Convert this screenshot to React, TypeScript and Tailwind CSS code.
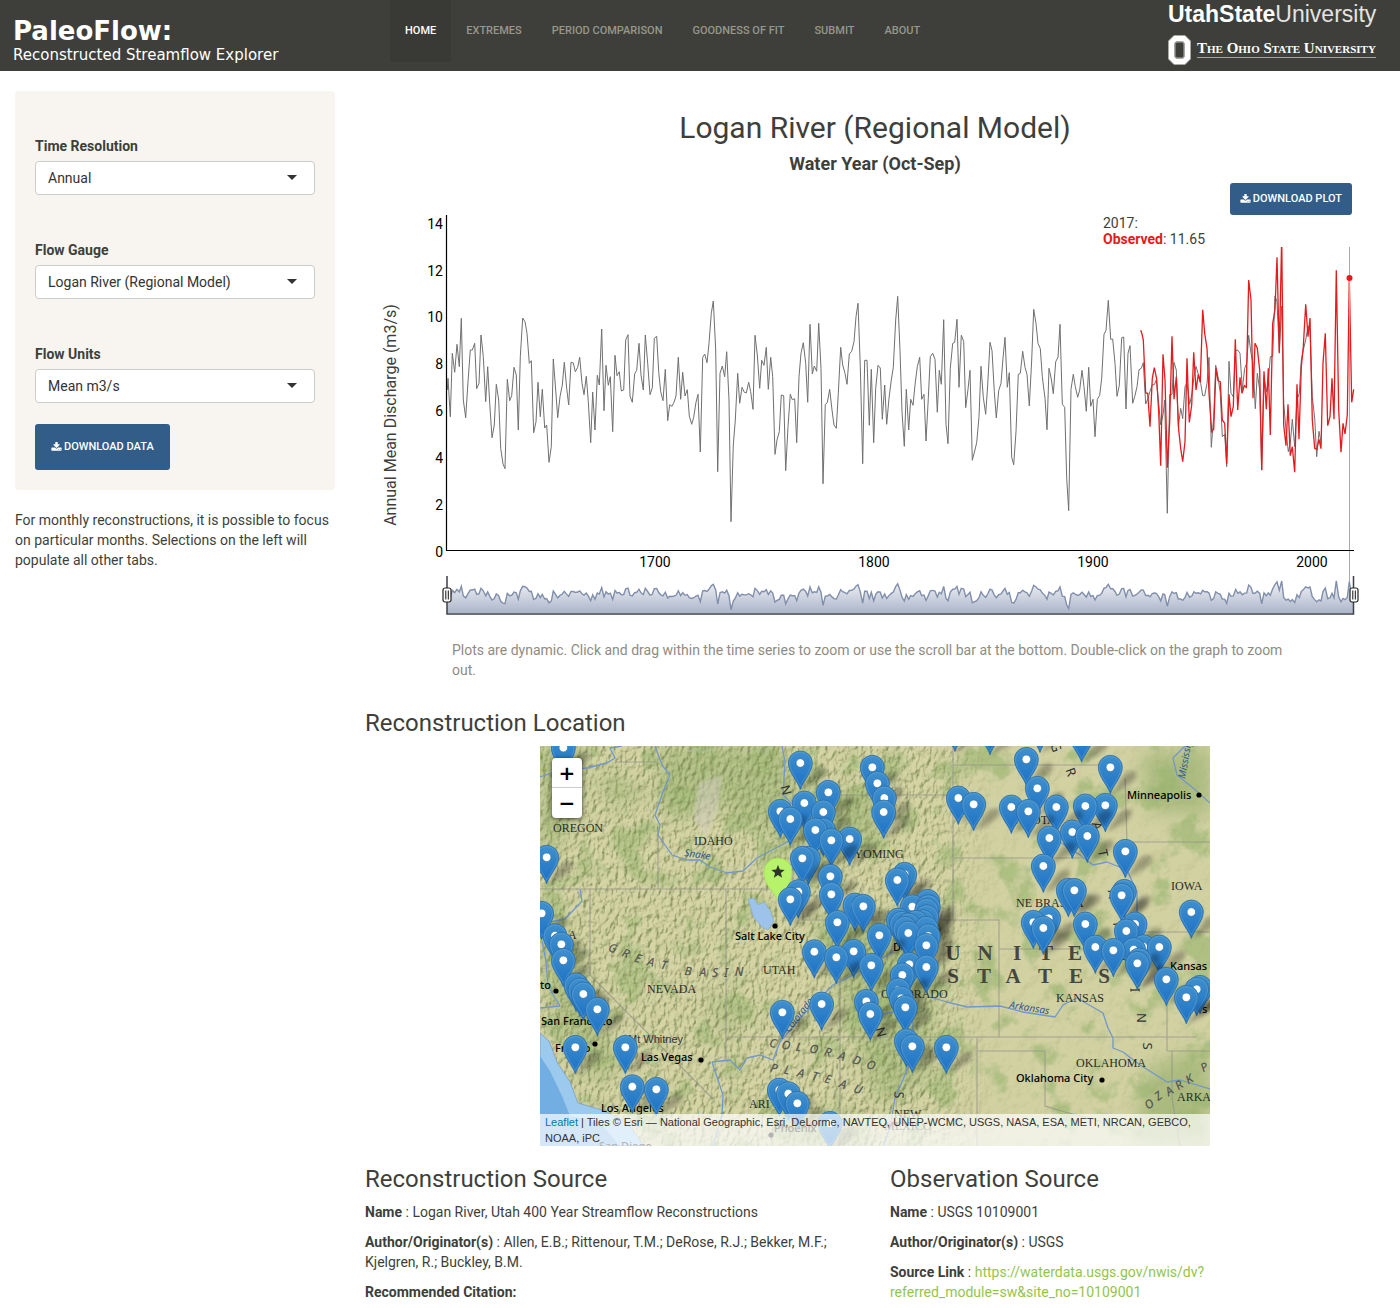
import React from "react";

type Point = [number, number];
type Letter = [string, number, number, number];

/* ---------- time series, traced in thirds of a pixel, strip by strip ---------- */

const STRIP_A =
  "82,570 84,535 91,650 97,460 104,517 111,433 118,500 124,355 130,600 137,653 144,545 151,450 157,450 164,430 170,566 177,550 183,405 190,470 197,605 203,500 209,610 216,713 223,675 229,553 236,600 242,745 249,792 255,806 262,538 269,602 275,587 282,502 289,525 295,690 301,470 308,354 315,365 321,400 328,490 334,482 341,698 348,665 354,547 361,650 367,568 374,684 380,675 387,787 394,740 400,477 407,570 413,653 420,590 427,555 433,487 440,565 446,615 453,487 460,489 466,515 473,502 479,472 486,550 492,584 499,529 505,605 512,728 518,576 525,690 532,526 538,555 545,387 552,632 558,496 565,556 571,530 578,695 585,466 591,527 598,515 604,573 611,570 617,420 624,404 630,588 637,607 644,521 650,511 657,430 663,525 670,570 676,405 683,490 690,584 697,563 703,415 710,409 716,515 722,575 729,602 736,508 743,662 749,614 756,619 762,607 768,588 775,472 782,598 788,517 795,588 802,569 808,648 815,673 821,652 828,607 834,583 841,756 848,472 854,462 861,488 867,430 874,340 880,303 887,450 893,815 900,520 907,498 914,530 920,455 927,600 933,965 940,735 946,660 953,520 959,610";
const STRIP_B =
  "36,382 43,397 49,399 56,367 62,395 69,448 75,226 82,285 89,385 95,301 102,316 109,262 115,388 122,292 128,350 135,583 141,540 148,515 154,405 161,407 167,632 174,500 181,403 187,419 194,416 200,548 207,350 213,280 220,248 227,310 233,427 240,193 247,342 253,318 260,334 266,190 273,325 279,671 286,433 292,428 299,388 306,450 312,495 319,505 325,400 332,262 338,315 345,340 351,373 358,282 365,274 372,245 378,170 384,130 391,320 398,611 404,301 411,301 418,496 424,328 431,548 437,385 444,316 451,324 457,478 464,375 470,493 477,415 484,360 490,322 497,180 503,109 510,272 516,455 523,559 529,388 536,510 542,418 549,436 555,375 562,320 569,292 575,418 582,403 588,543 595,415 601,290 608,280 615,298 622,457 628,331 634,373 641,179 648,493 654,551 661,325 668,250 674,247 681,178 687,382 694,226 701,244 707,443 714,388 720,331 727,601 734,573 740,548 747,470 753,319 760,412 767,463 773,375 780,247 786,272 793,395 799,474 806,392 813,370 819,295 825,232 832,382 838,338 845,592 851,614 858,515 865,343 871,340 878,274 885,322 891,343 898,438 905,300 911,148 918,190 924,250 931,266 937,350 945,415 951,509 957,325";
const STRIP_C =
  "34,447 40,491 47,395 54,382 60,283 67,523 74,532 80,745 86,842 93,478 100,433 106,470 113,502 119,480 126,421 132,470 139,544 146,412 152,529 159,508 165,620 172,508 179,496 185,445 192,313 198,301 205,211 212,328 218,327 225,400 231,499 238,466 245,323 251,321 258,537 264,370 270,347 278,520 284,500 291,470 297,419 304,415 310,398 317,522 324,505 330,484 337,464 343,464 349,450 356,520 362,584 369,555 374,510 382,850 389,494 396,493 402,397 409,420 415,590 422,535 428,566 435,470 441,460 449,523 456,490 462,440 468,409 475,433 482,460 488,497 494,497 501,460 507,382 514,652 521,560 527,406 534,440 541,490 547,620 554,613 560,710 567,394 573,490 580,500 587,361 594,361 600,370 607,478 614,415 620,400 626,316 633,370 639,400 646,536 652,430 659,480 665,720 672,440 679,485 685,455 691,380 698,379 705,198 711,215 718,365 725,228 731,520 738,600 745,665 751,640 757,568 764,650 771,510 778,490 784,390 790,360 797,330 804,288 810,300 817,500 824,565 830,680 837,604 843,638";
const OBSERVED =
  "302,301 306,312 310,330 317,489 323,490 330,590 337,445 343,413 350,447 356,545 362,707 369,373 375,450 382,713 389,575 396,319 402,508 409,440 416,600 422,655 428,695 435,635 441,385 448,577 455,525 461,367 468,480 475,433 481,457 488,239 494,310 501,355 507,490 515,605 521,598 528,415 534,452 541,456 547,570 554,580 560,702 567,493 573,560 580,530 586,328 593,540 600,442 606,490 613,467 619,472 626,150 633,210 639,505 645,340 652,355 659,420 665,721 672,424 679,538 685,415 691,615 698,280 705,240 711,82 718,370 725,20 731,585 738,647 744,523 751,677 757,650 764,727 771,463 777,628 784,410 790,350 797,223 804,320 810,264 817,570 824,655 830,658 837,628 843,656 849,400 856,310 863,587 870,560 876,445 882,568 889,121 896,540 903,667 909,580 915,612 922,555 928,143 935,517 941,478";

const parse = (s: string, dx: number, dy: number): Point[] =>
  s.split(" ").map((p) => {
    const [x, y] = p.split(",").map(Number);
    return [x / 3 + dx, y / 3 + dy];
  });

const reconstructed: Point[] = [
  ...parse(STRIP_A, 55, -15),
  ...parse(STRIP_B, 365, 45),
  ...parse(STRIP_C, 675, 15),
];
const observed: Point[] = parse(OBSERVED, 675, 15);

const AXIS_Y = 335;
const toPoints = (pts: Point[]) => pts.map(([x, y]) => `${x.toFixed(1)},${y.toFixed(1)}`).join(" ");

const lastReconstructed = reconstructed[reconstructed.length - 1][0];
const overview: Point[] = [
  ...reconstructed.map(([x, y]): Point => {
    const match = observed.find(([ox]) => Math.abs(ox - x) < 1);
    return [x, match ? (y + match[1]) / 2 : y];
  }),
  ...observed.filter(([x]) => x > lastReconstructed + 1),
].map(([x, y]): Point => [x, 398 - (AXIS_Y - y) * 0.115]);

const Y_TICKS: [string, number][] = [
  ["14", 8],
  ["12", 55],
  ["10", 101],
  ["8", 148],
  ["6", 195],
  ["4", 242],
  ["2", 289],
  ["0", 336],
];
const X_TICKS: [string, number][] = [
  ["1700", 290],
  ["1800", 509],
  ["1900", 728],
  ["2000", 947],
];

function RangeHandle({ x }: { x: number }) {
  return (
    <g transform={`translate(${x} 380)`}>
      <rect x="-4" y="-7" width="8" height="14" rx="2" fill="#fff" stroke="#222" strokeWidth="1.2" />
      <path d="M-1.2-4.5v9M1.3-4.5v9" stroke="#111" strokeWidth="1" />
    </g>
  );
}

function Chart() {
  return (
    <div className="relative w-full">
      <svg viewBox="0 0 1020 405" className="block w-full" role="img" aria-label="Annual mean discharge time series">
        <defs>
          <linearGradient id="overviewFill" x1="0" y1="365" x2="0" y2="400" gradientUnits="userSpaceOnUse">
            <stop offset="0" stopColor="#f4f5f8" />
            <stop offset="1" stopColor="#a7b1c7" />
          </linearGradient>
        </defs>
        <text x="31" y="200" transform="rotate(-90 31 200)" textAnchor="middle" className="fill-[#3e3f3a] text-[16px]">
          Annual Mean Discharge (m3/s)
        </text>
        <g className="fill-black text-[14px]">
          {Y_TICKS.map(([t, y]) => (
            <text key={t} x="78" y={y + 6} textAnchor="end">
              {t}
            </text>
          ))}
          {X_TICKS.map(([t, x]) => (
            <text key={t} x={x} y="352" textAnchor="middle">
              {t}
            </text>
          ))}
        </g>
        <polyline points={toPoints(reconstructed)} fill="none" stroke="#707070" strokeWidth="1" />
        <polyline points={toPoints(observed)} fill="none" stroke="#e41a1c" strokeWidth="1.3" />
        <path d="M984.5 32V398" stroke="#aaa" strokeWidth="1" />
        <circle cx="984.5" cy="63" r="3" fill="#e41a1c" />
        <path d="M81.500 0V335.500H989" fill="none" stroke="#000" strokeWidth="1.2" />
        <polygon points={`82,398 ${toPoints(overview)} 989,398`} fill="url(#overviewFill)" />
        <polyline points={toPoints(overview)} fill="none" stroke="#808fab" strokeWidth="1.4" />
        <path d="M82 361V399H988.500V361" fill="none" stroke="#3c3f47" strokeWidth="1.5" />
        <RangeHandle x={82} />
        <RangeHandle x={989} />
      </svg>
      <div className="absolute right-8 top-0 h-8 w-[250px] bg-white text-sm leading-4">
        2017:
        <br />
        <b className="text-[#e41a1c]">Observed</b>: 11.65
      </div>
    </div>
  );
}

/* ---------- map ---------- */

const MARKERS_WEST: Point[] = [
  [70, 8], [20, 337], [5, 505], [45, 572], [64, 598], [70, 646], [108, 720], [120, 735], [130, 747], [172, 793],
  [106, 907], [256, 907], [277, 1025], [349, 1033],
];
const MARKERS_CENTER: Point[] = [
  [121, 54], [337, 67], [352, 115], [373, 159], [371, 201], [205, 142], [133, 174], [190, 201], [61, 199], [91, 222],
  [190, 255], [166, 255], [214, 286], [269, 282], [145, 340], [127, 340], [211, 394], [214, 448], [115, 440], [91, 463],
  [285, 480], [310, 484], [232, 532], [358, 571], [163, 620], [281, 619], [229, 637], [334, 661], [185, 777], [67, 802],
  [319, 769], [331, 807], [434, 388], [412, 405], [457, 485], [503, 469], [505, 485], [500, 496], [500, 515], [488, 530],
  [415, 525], [425, 535], [445, 540], [435, 550], [468, 532], [499, 550], [505, 573], [445, 564], [499, 601], [448, 658],
  [499, 666], [427, 690], [415, 735], [424, 760], [436, 787], [439, 887], [457, 904], [559, 907], [595, 159], [641, 178],
  [58, 1035], [85, 1046], [112, 1075], [210, 1135], [585, -60],
];
const MARKERS_EAST: Point[] = [
  [30, -50], [180, -57], [305, -28], [139, 43], [391, 67], [172, 130], [94, 186], [145, 199], [229, 186], [316, 183],
  [376, 181], [208, 279], [277, 261], [322, 273], [436, 319], [190, 363], [265, 436], [283, 436], [433, 439], [425, 451],
  [634, 501], [160, 532], [206, 520], [190, 549], [316, 537], [465, 537], [439, 558], [346, 606], [400, 616], [461, 614],
  [490, 605], [538, 606], [478, 645], [472, 655], [559, 703], [660, 727], [650, 733], [619, 757],
];

const place = (pts: Point[], dx: number): Point[] => pts.map(([x, y]) => [x / 3 + dx, y / 3 - 1]);

const markers: Point[] = [...place(MARKERS_WEST, 0), ...place(MARKERS_CENTER, 220), ...place(MARKERS_EAST, 440)].sort(
  (a, b) => a[1] - b[1],
);

const STATE_LABELS: [string, number, number][] = [
  ["OREGON", 13, 86],
  ["IDAHO", 154, 99],
  ["NEVADA", 107, 247],
  ["UTAH", 223, 228],
  ["WYOMING", 303, 112],
  ["COLORADO", 341, 252],
  ["NE BRASKA", 476, 161],
  ["KANSAS", 516, 256],
  ["OKLAHOMA", 536, 321],
  ["IOWA", 631, 144],
  ["ARKA", 637, 355],
  ["ARI", 209, 362],
  ["NEW", 354, 372],
  ["MEXICO", 344, 384],
  ["A", 28, 193],
  ["DAKOTA", 466, 78],
];

const CITY_LABELS: [string, number, number][] = [
  ["Salt Lake City", 195, 194],
  ["to", 0, 243],
  ["San Francisco", 1, 279],
  ["Fresno", 15, 306],
  ["Las Vegas", 101, 315],
  ["Los Angeles", 61, 366],
  ["Minneapolis", 587, 53],
  ["Oklahoma City", 476, 336],
  ["Kansas", 630, 224],
  ["Phoenix", 234, 386],
  ["San Diego", 59, 404],
  ["D", 353, 205],
  ["s", 662, 267],
];

const CITY_DOTS: Point[] = [
  [16, 245], [55, 298], [161, 314], [235, 180], [659, 49], [562, 334], [231, 389],
];

const RANGE_LETTERS: Letter[] = [
  ["G", 73, 202, 22], ["R", 86, 207, 22], ["E", 98, 212, 18], ["A", 111, 216, 14], ["T", 124, 219, 12],
  ["B", 148, 225, 6], ["A", 163, 226, 2], ["S", 175, 227, 0], ["I", 186, 227, 0], ["N", 199, 226, 0],
  ["C", 233, 297, 10], ["O", 246, 299, 10], ["L", 259, 301, 10], ["O", 274, 303, 12], ["R", 288, 306, 15],
  ["A", 302, 310, 18], ["D", 317, 314, 18], ["O", 331, 319, 20],
  ["P", 234, 322, 12], ["L", 247, 324, 12], ["A", 261, 327, 14], ["T", 275, 330, 14], ["E", 288, 333, 16],
  ["A", 303, 338, 20], ["U", 318, 343, 20],
  ["O", 609, 358, -38], ["Z", 618, 350, -38], ["A", 629, 345, -35], ["R", 639, 339, -35], ["K", 649, 333, -30],
  ["P", 664, 321, -30],
];

const PLAINS_LETTERS: Letter[] = [
  ["N", 246, 44, 75], ["N", 341, 286, 75], ["S", 359, 349, 95], ["G", 516, 1, 70], ["R", 531, 26, 70],
  ["A", 557, 80, 75], ["T", 563, 107, 78], ["A", 573, 148, 82], ["P", 578, 180, 85], ["L", 583, 215, 85],
  ["I", 595, 244, 88], ["N", 602, 272, 90], ["S", 608, 300, 90],
];

const COUNTRY_LETTERS: Letter[] = [
  ["U", 413, 206, 0], ["N", 445, 206, 0], ["I", 477, 206, 0], ["T", 506, 206, 0], ["E", 535, 206, 0],
  ["S", 413, 229, 0], ["T", 444, 229, 0], ["A", 473, 229, 0], ["T", 505, 229, 0], ["E", 536, 229, 0], ["S", 564, 229, 0],
];

function Letters({ items, size }: { items: Letter[]; size: number }) {
  return (
    <>
      {items.map(([c, x, y, r], i) => (
        <text key={i} transform={`translate(${x} ${y}) rotate(${r})`} y={size * 0.36} textAnchor="middle">
          {c}
        </text>
      ))}
    </>
  );
}

function MapDrawing() {
  return (
    <svg
      viewBox="0 0 670 400"
      preserveAspectRatio="xMidYMid slice"
      className="block h-full w-full"
      role="img"
      aria-label="Map of streamflow reconstruction sites in the western United States"
    >
      <defs>
        <filter id="hills" x="0" y="0" width="100%" height="100%" colorInterpolationFilters="sRGB">
          <feTurbulence type="fractalNoise" baseFrequency="0.22 0.14" numOctaves="4" seed="7" />
          <feDiffuseLighting surfaceScale="2" diffuseConstant="1.1" lightingColor="#fff">
            <feDistantLight azimuth="225" elevation="55" />
          </feDiffuseLighting>
          <feColorMatrix values="0 0 0 0 0.5  0 0 0 0 0.54  0 0 0 0 0.34  -2.2 0 0 0 1.95" />
        </filter>
        <filter id="ridges" x="0" y="0" width="100%" height="100%" colorInterpolationFilters="sRGB">
          <feTurbulence type="fractalNoise" baseFrequency="0.22 0.14" numOctaves="4" seed="7" />
          <feDiffuseLighting surfaceScale="2" diffuseConstant="1.1" lightingColor="#fff">
            <feDistantLight azimuth="225" elevation="55" />
          </feDiffuseLighting>
          <feColorMatrix values="0 0 0 0 0.93  0 0 0 0 0.92  0 0 0 0 0.76  5 0 0 0 -4.6" />
        </filter>
        <filter id="plainsRelief" x="0" y="0" width="100%" height="100%" colorInterpolationFilters="sRGB">
          <feTurbulence type="fractalNoise" baseFrequency="0.07" numOctaves="4" seed="3" />
          <feDiffuseLighting surfaceScale="1.2" diffuseConstant="1.1" lightingColor="#fff">
            <feDistantLight azimuth="225" elevation="55" />
          </feDiffuseLighting>
          <feColorMatrix values="0 0 0 0 0.55  0 0 0 0 0.58  0 0 0 0 0.38  -1.5 0 0 0 1.36" />
        </filter>
        <filter id="forest" x="0" y="0" width="100%" height="100%" colorInterpolationFilters="sRGB">
          <feTurbulence type="fractalNoise" baseFrequency="0.028" numOctaves="5" seed="21" />
          <feColorMatrix values="0 0 0 0 0.6  0 0 0 0 0.71  0 0 0 0 0.44  7 0 0 0 -3.8" />
        </filter>
        <filter id="soft">
          <feGaussianBlur stdDeviation="9" />
        </filter>
        <filter id="shadowBlur" x="-50%" y="-50%" width="200%" height="200%">
          <feGaussianBlur stdDeviation="2" />
        </filter>
        <linearGradient id="westFade" x1="0" x2="1">
          <stop offset="0.58" stopColor="#fff" />
          <stop offset="0.68" stopColor="#000" />
        </linearGradient>
        <mask id="westMask">
          <rect width="670" height="400" fill="url(#westFade)" />
        </mask>
        <linearGradient id="pinFill" x1="0" x2="0" y1="0" y2="1">
          <stop offset="0" stopColor="#4090cd" />
          <stop offset="1" stopColor="#1b70c4" />
        </linearGradient>
        <g id="pin">
          <path d="M1 27L12 10C18 2 28 2 26 9C24 16 12 21 1 27Z" fill="#000" opacity="0.26" filter="url(#shadowBlur)" />
          <path
            d="M0 26.500C-2 19-12 9.500-12 0A12 12 0 0 1 12 0C12 9.500 2 19 0 26.500Z"
            fill="url(#pinFill)"
            stroke="#2e6da4"
            strokeWidth="0.8"
          />
          <path
            d="M0 23C-2 17-10.800 8.500-10.800 0A10.800 10.800 0 0 1 10.800 0C10.800 8.500 2 17 0 23Z"
            fill="none"
            stroke="#67a9dc"
            strokeWidth="0.8"
            opacity="0.6"
          />
          <circle r="4.300" fill="#fff" stroke="#2a72b0" strokeWidth="0.7" />
        </g>
      </defs>

      <rect width="670" height="400" fill="#d1d1a2" />
      <g fill="#93ad68" opacity="0.6" filter="url(#soft)">
        <path d="M0 0H45L40 60L10 110L0 130ZM60 20L110 50L70 60ZM120 0H245L270 90L215 80L180 60L140 75L120 60Z" />
        <path d="M0 170L35 200L55 260L80 320L60 340L30 300L5 240ZM240 60L330 40L345 90L260 140ZM270 170L400 170L390 330L340 360L300 250Z" />
        <path d="M600 10L670 0V70L610 65ZM610 320L670 300V400H590ZM160 240L200 270L190 300ZM240 370H330V400H240Z" />
      </g>
      <rect width="670" height="400" filter="url(#forest)" opacity="0.6" />
      <g mask="url(#westMask)">
        <rect width="670" height="400" filter="url(#hills)" opacity="0.85" />
        <rect width="670" height="400" filter="url(#ridges)" opacity="0.45" />
      </g>
      <rect width="670" height="400" filter="url(#plainsRelief)" opacity="0.6" />
      <path d="M158 38L182 28L178 60L166 90L154 72Z" fill="#d6cfc6" opacity="0.5" filter="url(#shadowBlur)" />

      {/* water */}
      <path d="M0 287L9 295L17 316L30 336L38 357L62 364L87 376L104 400H0Z" fill="#9ccaee" stroke="#7b9fc4" strokeWidth="0.8" />
      <path d="M0 310L10 325L22 350L30 370L60 376L80 400H0Z" fill="#73aee2" />
      <path d="M208 153L214 152L218 159L224 156L230 164L234 175L228 184L222 181L214 172Z" fill="#9dc3ea" stroke="#84a6cd" strokeWidth="0.6" />

      {/* state borders */}
      <g fill="none" stroke="#8f8f86" strokeWidth="1.1" opacity="0.7">
        <path d="M0 143H253M118 143V90M50 143V229L173 353M186 143V291H657M75 16H118M253 143V49H413M263 174H413M300 174V400" />
        <path d="M413 0V174H459V291M413 19H577M413 112H550M585 32L587 96H670M597 186H670M459 203H580M627 233V305M437 291V305H505V360L525 366L560 375" />
        <path d="M627 305H670M632 305V352L640 400M437 305V400M253 143H263V174M186 291V315" />
      </g>

      {/* rivers */}
      <g fill="none" stroke="#7397cb" strokeWidth="1.300" strokeLinejoin="round">
        <path d="M0 31L20 24L47 22L67 17L75 12L70 2L82 0M115 0L122 19L130 29L123 46L115 69L120 79L118 89L132 109L147 114L160 114L170 121L187 127L203 125L217 112L253 93" />
        <path d="M40 143L42 155L25 173L10 176M2 195L6 215L8 240L20 260L0 262M172 316L183 349L182 369L173 400M172 316L190 314L200 324L207 312L220 309L233 314L240 296L263 269L293 239L313 229L353 206" />
        <path d="M390 251L407 256L427 261L460 260L483 266L515 271L523 259L537 252L563 267L568 282L573 292L573 302L583 306L600 319L613 327L627 336L640 334L670 343" />
        <path d="M520 96L540 109L553 119L567 116L587 124L597 146L597 166M645 0L633 12L637 29L653 42L670 57M340 269L353 266L373 276L373 306L365 329L355 352L350 382L343 400M242 0L245 16L243 49L253 59" />
      </g>

      {/* lettering */}
      <g className="fill-[#2b2c28] font-['Liberation_Serif'] text-[12px]">
        {STATE_LABELS.map(([t, x, y]) => (
          <text key={t} x={x} y={y}>
            {t}
          </text>
        ))}
      </g>
      <g className="fill-[#565954] font-['Noto_Sans'] text-[12px] font-medium italic">
        <Letters items={RANGE_LETTERS} size={12} />
      </g>
      <g className="fill-[#333] font-['Noto_Sans'] text-[13px]">
        <Letters items={PLAINS_LETTERS} size={13} />
      </g>
      <g className="fill-[#46473f] font-['Liberation_Serif'] text-[21px] font-bold">
        <Letters items={COUNTRY_LETTERS} size={21} />
      </g>
      <g className="fill-[#31598f] font-['Noto_Sans'] text-[10px] italic">
        <text transform="translate(144 110) rotate(8)">Snake</text>
        <text transform="translate(469 262) rotate(9)">Arkansas</text>
        <text transform="translate(249 287) rotate(-52)">Colorado</text>
        <text transform="translate(645 33) rotate(-80)">Mississippi</text>
      </g>
      <g className="fill-black font-['Noto_Sans'] text-[11px] font-medium">
        {CITY_LABELS.map(([t, x, y]) => (
          <text key={t} x={x} y={y}>
            {t}
          </text>
        ))}
        {CITY_DOTS.map(([x, y]) => (
          <circle key={x} cx={x} cy={y} r="2.600" />
        ))}
      </g>
      <text x="88" y="297" className="fill-[#333] font-['Liberation_Sans'] text-[11px]">
        Mt Whitney
      </text>

      {/* selected site and the others */}
      <path
        d="M238 156C236 146 224 141 224 126A14 14 0 0 1 252 126C252 141 240 146 238 156Z"
        fill="#b6f36a"
        stroke="#a3dd58"
        strokeWidth="0.8"
      />
      <path d="M238 119L239.800 123.600L244.600 123.900L240.900 127L242.100 131.700L238 129.100L233.900 131.700L235.100 127L231.400 123.900L236.200 123.600Z" fill="#2d3328" />
      {markers.map(([x, y], i) => (
        <use key={i} href="#pin" x={x} y={y} />
      ))}
    </svg>
  );
}

function SiteMap() {
  return (
    <div className="relative mx-auto h-[400px] w-full max-w-[670px] overflow-hidden bg-[#cfd0a0]">
      <MapDrawing />
      <div className="absolute left-3 top-3 flex w-[30px] flex-col overflow-hidden rounded bg-white font-['DejaVu_Sans'] text-xl font-bold leading-[30px] text-black shadow-[0_1px_5px_rgba(0,0,0,0.65)]">
        <button aria-label="Zoom in" className="h-[30px] border-b border-[#ccc]">
          +
        </button>
        <button aria-label="Zoom out" className="h-[30px]">
          −
        </button>
      </div>
      <div className="absolute inset-x-0 bottom-0 bg-white/70 px-[5px] font-['Liberation_Sans'] text-[11px] leading-4 text-[#333]">
        <a href="#leaflet" className="text-[#0078a8]">
          Leaflet
        </a>{" "}
        | Tiles © Esri — National Geographic, Esri, DeLorme, NAVTEQ, UNEP-WCMC, USGS, NASA, ESA, METI, NRCAN, GEBCO, NOAA, iPC
      </div>
    </div>
  );
}

/* ---------- page parts ---------- */

const NAV = ["Home", "Extremes", "Period Comparison", "Goodness of Fit", "Submit", "About"];

function Header() {
  return (
    <header className="flex h-[71px] items-start bg-[#3e3f3a]">
      <a href="#home" className="w-[390px] pl-[13px] pt-[15px] font-['DejaVu_Sans'] text-white">
        <span className="block text-[26px] font-bold leading-8">PaleoFlow:</span>
        <span className="block whitespace-nowrap text-[15px] leading-4">Reconstructed Streamflow Explorer</span>
      </a>
      <nav className="flex text-[11px] font-medium uppercase leading-[62px]">
        {NAV.map((item, i) => (
          <a
            key={item}
            href={`#${item.toLowerCase().replace(/ /g, "-")}`}
            className={i === 0 ? "bg-[#393a35] px-[15px] text-white" : "px-[15px] text-[#98978b]"}
          >
            {item}
          </a>
        ))}
      </nav>
      <div className="ml-auto mr-6 flex w-[208px] flex-col text-white">
        <a href="#usu" className="whitespace-nowrap font-['Liberation_Sans'] text-[23px] leading-7">
          <b>UtahState</b>
          <span className="text-[#e4e4e2]">University</span>
        </a>
        <a href="#osu" className="mt-[7px] flex items-start gap-[6px]">
          <svg viewBox="0 0 23 30" className="h-[30px] w-[23px] shrink-0" aria-hidden="true">
            <path d="M6 .5H17L22.500 6V24L17 29.500H6L.5 24V6Z" fill="#fff" stroke="#a8a8a5" />
            <path d="M8.500 7H14.500L16 8.500V21.500L14.500 23H8.500L7 21.500V8.500Z" fill="#3e3f3a" stroke="#8b8b88" strokeWidth="1.500" />
          </svg>
          <span className="mt-1 flex-1 whitespace-nowrap border-b border-[#a3a39f] font-['Liberation_Serif'] text-[15px] font-bold leading-[18px] [font-variant-caps:small-caps]">
            The Ohio State University
          </span>
        </a>
      </div>
    </header>
  );
}

function SelectField({ id, label, value }: { id: string; label: string; value: string }) {
  return (
    <div>
      <label htmlFor={id} className="mb-[5px] block font-bold">
        {label}
      </label>
      <div className="relative">
        <select
          id={id}
          className="h-[34px] w-full appearance-none rounded border border-[#ccc] bg-white px-3 text-sm text-[#333]"
        >
          <option>{value}</option>
        </select>
        <svg viewBox="0 0 10 5" className="pointer-events-none absolute right-[18px] top-[14px] h-[5px] w-[10px]" aria-hidden="true">
          <path d="M0 0H10L5 5Z" fill="#333" />
        </svg>
      </div>
    </div>
  );
}

function DownloadIcon() {
  return (
    <svg viewBox="0 128 1792 1792" className="size-[11px]" fill="currentColor" aria-hidden="true">
      <path d="M1344 1344q0-26-19-45t-45-19-45 19-19 45 19 45 45 19 45-19 19-45zm256 0q0-26-19-45t-45-19-45 19-19 45 19 45 45 19 45-19 19-45zm128-224v320q0 40-28 68t-68 28h-1472q-40 0-68-28t-28-68v-320q0-40 28-68t68-28h465l135 136q58 56 136 56t136-56l136-136h464q40 0 68 28t28 68zm-325-569q17 41-14 70l-448 448q-18 19-45 19t-45-19l-448-448q-31-29-14-70 17-39 59-39h256v-448q0-26 19-45t45-19h256q26 0 45 19t19 45v448h256q42 0 59 39z" />
    </svg>
  );
}

function DownloadButton({ children, className }: { children: string; className: string }) {
  return (
    <button
      className={`flex items-center gap-[2px] whitespace-nowrap rounded-[3px] bg-[#325d88] text-[11px] font-medium uppercase text-white ${className}`}
    >
      <DownloadIcon />
      {children}
    </button>
  );
}

function Fact({ name, children }: { name: string; children?: React.ReactNode }) {
  return (
    <p className="mb-[10px]">
      <b>{name}</b>
      {children}
    </p>
  );
}

export default function App() {
  return (
    <div className="min-h-screen bg-white font-['Roboto',sans-serif] text-sm leading-5 text-[#3e3f3a]">
      <Header />
      <div className="grid grid-cols-[1fr_3fr] pt-5">
        <aside className="px-[15px]">
          <form className="flex flex-col rounded bg-[#f8f5f0] px-5 pb-5 pt-[45px]">
            <div className="flex flex-col gap-[45px]">
              <SelectField id="resolution" label="Time Resolution" value="Annual" />
              <SelectField id="gauge" label="Flow Gauge" value="Logan River (Regional Model)" />
              <SelectField id="units" label="Flow Units" value="Mean m3/s" />
            </div>
            <DownloadButton className="mt-[21px] h-[46px] self-start px-4">Download Data</DownloadButton>
          </form>
          <p className="mt-5">
            For monthly reconstructions, it is possible to focus on particular months. Selections on the left will populate
            all other tabs.
          </p>
        </aside>

        <main className="px-[15px] pt-5">
          <h1 className="text-center text-[30px] leading-[34px]">Logan River (Regional Model)</h1>
          <h2 className="mt-2 text-center text-lg font-bold leading-[22px]">Water Year (Oct-Sep)</h2>
          <div className="mr-[33px] mt-2 flex justify-end">
            <DownloadButton className="h-8 px-[10px]">Download Plot</DownloadButton>
          </div>
          <Chart />
          <p className="mx-[87px] mt-5 text-[#8e8c84]">
            Plots are dynamic. Click and drag within the time series to zoom or use the scroll bar at the bottom.
            Double-click on the graph to zoom out.
          </p>
          <h3 className="mb-[10px] mt-[30px] text-2xl leading-[26px]">Reconstruction Location</h3>
          <SiteMap />
          <div className="mt-5 grid grid-cols-2 gap-[30px]">
            <section>
              <h3 className="mb-[10px] text-2xl leading-[26px]">Reconstruction Source</h3>
              <Fact name="Name"> : Logan River, Utah 400 Year Streamflow Reconstructions</Fact>
              <Fact name="Author/Originator(s)">
                {" "}
                : Allen, E.B.; Rittenour, T.M.; DeRose, R.J.; Bekker, M.F.; Kjelgren, R.; Buckley, B.M.
              </Fact>
              <Fact name="Recommended Citation:" />
            </section>
            <section>
              <h3 className="mb-[10px] text-2xl leading-[26px]">Observation Source</h3>
              <Fact name="Name"> : USGS 10109001</Fact>
              <Fact name="Author/Originator(s)"> : USGS</Fact>
              <Fact name="Source Link">
                {" "}
                :{" "}
                <a href="#usgs" className="text-[#93c54b]">
                  https://waterdata.usgs.gov/nwis/dv?
                  <wbr />
                  referred_module=sw&amp;site_no=10109001
                </a>
              </Fact>
            </section>
          </div>
        </main>
      </div>
    </div>
  );
}
